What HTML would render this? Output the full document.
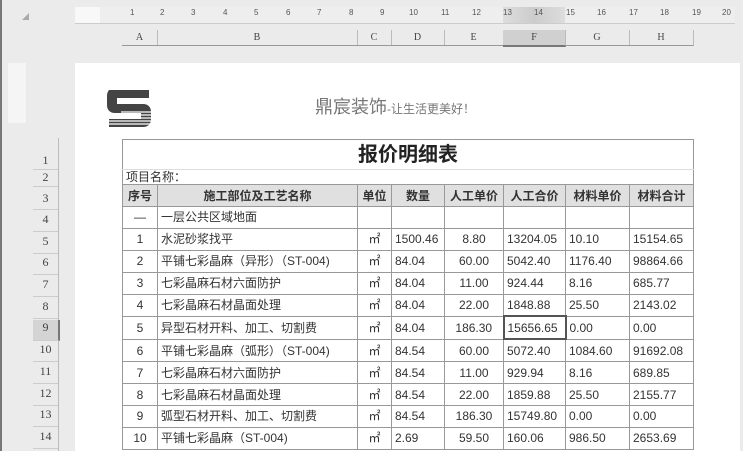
<!DOCTYPE html><html><head><meta charset="utf-8"><style>
html,body{margin:0;width:743px;height:451px;overflow:hidden}
body{background:#ebebeb;font-family:"Liberation Sans","Noto Sans CJK SC",sans-serif;position:relative}
.a{position:absolute}
table{border-collapse:collapse;position:absolute;left:122px;top:139px;table-layout:fixed;font-size:12px;color:#333}
td{border:1px solid #999;padding:0 3px;height:20.9px;line-height:14px;white-space:nowrap;overflow:hidden}
.c{text-align:center}.r{text-align:center}
.h td{background:#e0e0e0;font-weight:bold;text-align:center;height:21px}
.rn{position:absolute;left:33px;width:25px;text-align:center;font-family:"Liberation Serif",serif;font-size:12px;color:#444;border-bottom:1px solid #ccc}
.ch{position:absolute;top:30px;height:15px;text-align:center;font-family:"Liberation Serif",serif;font-size:10px;color:#444;border-right:1px solid #bbb;border-bottom:1px solid #999;line-height:15px}
.rt{position:absolute;top:8px;font-size:8px;color:#555}
</style></head><body>
<div class="a" style="left:0;top:0;width:2px;height:451px;background:#777"></div>
<div class="a" style="left:22px;top:13px;width:0;height:0;border-left:7px solid transparent;border-bottom:7px solid #aaa"></div>
<div class="a" style="left:75px;top:7px;width:660px;height:16px;background:#eee;border-bottom:1px solid #ccc"></div>
<div class="a" style="left:75px;top:7px;width:25px;height:16px;background:#f8f8f8"></div>
<div class="a" style="left:503px;top:7px;width:62px;height:16px;background:linear-gradient(90deg,#ddd,#ccc,#ddd)"></div>
<div class="rt" style="left:130px">1</div><div class="rt" style="left:160px">2</div><div class="rt" style="left:191px">3</div><div class="rt" style="left:223px">4</div><div class="rt" style="left:254px">5</div><div class="rt" style="left:286px">6</div><div class="rt" style="left:317px">7</div><div class="rt" style="left:349px">8</div><div class="rt" style="left:380px">9</div><div class="rt" style="left:409px">10</div><div class="rt" style="left:441px">11</div><div class="rt" style="left:472px">12</div><div class="rt" style="left:503px">13</div><div class="rt" style="left:534px">14</div><div class="rt" style="left:566px">15</div><div class="rt" style="left:597px">16</div><div class="rt" style="left:629px">17</div><div class="rt" style="left:660px">18</div><div class="rt" style="left:692px">19</div><div class="rt" style="left:722px">20</div>
<div class="ch" style="left:122px;width:35px">A</div><div class="ch" style="left:157px;width:200px">B</div><div class="ch" style="left:357px;width:34px">C</div><div class="ch" style="left:391px;width:53px">D</div><div class="ch" style="left:444px;width:59px">E</div><div class="ch" style="left:503px;width:62px;background:#d0d0d0;border-bottom:2px solid #777">F</div><div class="ch" style="left:565px;width:64px">G</div><div class="ch" style="left:629px;width:64px">H</div>
<div class="a" style="left:8px;top:63px;width:18px;height:60px;background:#f5f5f5"></div>
<div class="a" style="left:33px;top:138px;width:25px;height:313px;border-right:1px solid #bbb"></div>
<div class="rn" style="top:153px;height:16px">1</div><div class="rn" style="top:170px;height:16px">2</div><div class="rn" style="top:191px;height:18px">3</div>
<div class="rn" style="top:212px;height:19px">4</div><div class="rn" style="top:234px;height:19px">5</div><div class="rn" style="top:255px;height:19px">6</div><div class="rn" style="top:277px;height:19px">7</div><div class="rn" style="top:299px;height:19px">8</div><div class="rn" style="top:320px;height:20px;background:#d4d4d4;border-right:2px solid #777">9</div><div class="rn" style="top:342px;height:19px">10</div><div class="rn" style="top:364px;height:19px">11</div><div class="rn" style="top:386px;height:19px">12</div><div class="rn" style="top:407px;height:19px">13</div><div class="rn" style="top:429px;height:19px">14</div>
<div class="a" style="left:75px;top:63px;width:665px;height:388px;background:#fff"></div>
<svg class="a" style="left:107px;top:90px" width="44" height="37" viewBox="0 0 44 37"><path d="M2 0h40v8H10v6h26c5 0 8 3 8 8v7c0 5-3 8-8 8H2v-8h32v-6H8c-5 0-8-3-8-8V6c0-4 2-6 2-6z" fill="#444"/><g stroke="#fff" stroke-width="1.2"><line x1="14" y1="22" x2="44" y2="22"/><line x1="0" y1="25" x2="44" y2="25"/><line x1="0" y1="28" x2="44" y2="28"/><line x1="0" y1="31" x2="44" y2="31"/><line x1="0" y1="34" x2="44" y2="34"/></g></svg>
<div class="a" style="left:315px;top:93px;font-size:18px;color:#777">鼎宸装饰<span style="font-size:12px">-让生活更美好！</span></div>
<table>
<colgroup><col style="width:35px"><col style="width:200px"><col style="width:34px"><col style="width:53px"><col style="width:59px"><col style="width:62px"><col style="width:64px"><col style="width:64px"></colgroup>
<tr><td colspan="8" class="c" style="height:29px;font-size:20px;font-weight:bold;color:#222;border-bottom:1px solid #ddd">报价明细表</td></tr>
<tr><td colspan="8" style="height:14px;border-top:none;border-bottom:1px solid #999">项目名称：</td></tr>
<tr class="h"><td>序号</td><td>施工部位及工艺名称</td><td>单位</td><td>数量</td><td>人工单价</td><td>人工合价</td><td>材料单价</td><td>材料合计</td></tr>
<tr><td class="c">—</td><td>一层公共区域地面</td><td></td><td></td><td></td><td></td><td></td><td></td></tr>
<tr><td class="c">1</td><td>水泥砂浆找平</td><td class="c">㎡</td><td>1500.46</td><td class="r">8.80</td><td>13204.05</td><td>10.10</td><td>15154.65</td></tr>
<tr><td class="c">2</td><td>平铺七彩晶麻（异形）（ST-004)</td><td class="c">㎡</td><td>84.04</td><td class="r">60.00</td><td>5042.40</td><td>1176.40</td><td>98864.66</td></tr>
<tr><td class="c">3</td><td>七彩晶麻石材六面防护</td><td class="c">㎡</td><td>84.04</td><td class="r">11.00</td><td>924.44</td><td>8.16</td><td>685.77</td></tr>
<tr><td class="c">4</td><td>七彩晶麻石材晶面处理</td><td class="c">㎡</td><td>84.04</td><td class="r">22.00</td><td>1848.88</td><td>25.50</td><td>2143.02</td></tr>
<tr><td class="c">5</td><td>异型石材开料、加工、切割费</td><td class="c">㎡</td><td>84.04</td><td class="r">186.30</td><td style="border:2px solid #555">15656.65</td><td>0.00</td><td>0.00</td></tr>
<tr><td class="c">6</td><td>平铺七彩晶麻（弧形）（ST-004)</td><td class="c">㎡</td><td>84.54</td><td class="r">60.00</td><td>5072.40</td><td>1084.60</td><td>91692.08</td></tr>
<tr><td class="c">7</td><td>七彩晶麻石材六面防护</td><td class="c">㎡</td><td>84.54</td><td class="r">11.00</td><td>929.94</td><td>8.16</td><td>689.85</td></tr>
<tr><td class="c">8</td><td>七彩晶麻石材晶面处理</td><td class="c">㎡</td><td>84.54</td><td class="r">22.00</td><td>1859.88</td><td>25.50</td><td>2155.77</td></tr>
<tr><td class="c">9</td><td>弧型石材开料、加工、切割费</td><td class="c">㎡</td><td>84.54</td><td class="r">186.30</td><td>15749.80</td><td>0.00</td><td>0.00</td></tr>
<tr><td class="c">10</td><td>平铺七彩晶麻（ST-004)</td><td class="c">㎡</td><td>2.69</td><td class="r">59.50</td><td>160.06</td><td>986.50</td><td>2653.69</td></tr>
</table>
</body></html>
